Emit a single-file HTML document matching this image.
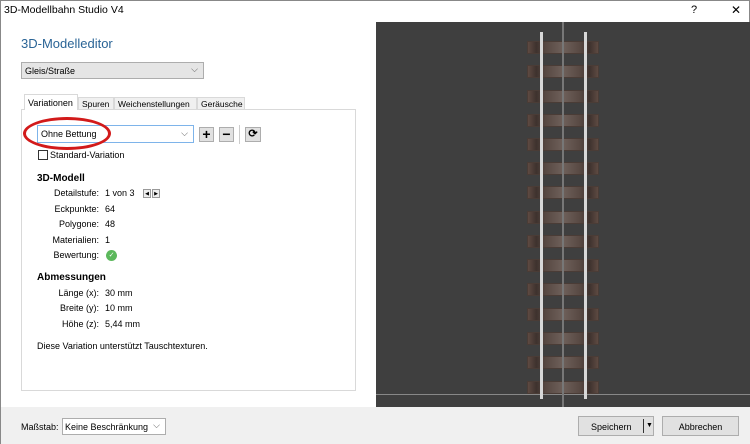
<!DOCTYPE html><html><head><meta charset="utf-8"><style>
*{margin:0;padding:0;box-sizing:border-box}
body{width:750px;height:444px;overflow:hidden;background:#fff;font-family:"Liberation Sans",sans-serif;font-size:9px;color:#000;position:relative;border:1px solid #888}
.a{position:absolute;white-space:nowrap}
.r{text-align:right;width:80px}
.sl{position:absolute;left:526px;width:72px;height:13px;background:linear-gradient(90deg,#5e4a42 0,#3e322e 12%,#574842 25%,#6e605a 50%,#574842 75%,#3e322e 88%,#5e4a42 100%);border:1px solid #4a3c36}
</style></head><body>
<div class="a" style="left:3px;top:3px;font-size:10.5px">3D-Modellbahn Studio V4</div>
<div class="a" style="left:690px;top:3px;font-size:11px">?</div>
<div class="a" style="left:730px;top:2px;font-size:12px">✕</div>
<div class="a" style="left:20px;top:35px;font-size:13px;color:#2a6496">3D-Modelleditor</div>
<div class="a" style="left:20px;top:61px;width:183px;height:17px;background:#e5e5e5;border:1px solid #adadad;padding:3px 3px">Gleis/Straße<span style="position:absolute;right:5px;top:1px;color:#555">⌵</span></div>
<div class="a" style="left:20px;top:108px;width:335px;height:282px;border:1px solid #d9d9d9;background:#fff"></div>
<div class="a" style="left:23px;top:93px;width:54px;height:16px;border:1px solid #d9d9d9;border-bottom:none;background:#fff;padding:3px 3px">Variationen</div>
<div class="a" style="left:77px;top:96px;width:36px;height:13px;border:1px solid #d9d9d9;background:#f0f0f0;padding:1px 3px;font-size:8.5px">Spuren</div>
<div class="a" style="left:113px;top:96px;width:83px;height:13px;border:1px solid #d9d9d9;background:#f0f0f0;padding:1px 3px;font-size:8.5px">Weichenstellungen</div>
<div class="a" style="left:196px;top:96px;width:48px;height:13px;border:1px solid #d9d9d9;background:#f0f0f0;padding:1px 3px;font-size:8.5px">Geräusche</div>
<div class="a" style="left:36px;top:124px;width:157px;height:18px;border:1px solid #7eb4ea;background:#fff;padding:3px 3px">Ohne Bettung<span style="position:absolute;right:5px;top:2px;color:#555">⌵</span></div>
<div class="a" style="left:22px;top:116px;width:88px;height:33px;border:3px solid #d21a1a;border-radius:50%"></div>
<div class="a" style="left:198px;top:126px;width:15px;height:15px;background:#e1e1e1;border:1px solid #adadad;font-size:14px;font-weight:bold;text-align:center;line-height:12px">+</div>
<div class="a" style="left:218px;top:126px;width:15px;height:15px;background:#e1e1e1;border:1px solid #adadad;font-size:14px;font-weight:bold;text-align:center;line-height:12px">−</div>
<div class="a" style="left:238px;top:124px;width:1px;height:19px;background:#ccc"></div>
<div class="a" style="left:244px;top:126px;width:16px;height:15px;background:#e1e1e1;border:1px solid #adadad;font-size:11px;font-weight:bold;text-align:center;line-height:13px">⟳</div>
<div class="a" style="left:37px;top:149px;width:10px;height:10px;border:1px solid #333"></div>
<div class="a" style="left:49px;top:149px">Standard-Variation</div>
<div class="a" style="left:36px;top:172px;font-weight:bold;font-size:10px">3D-Modell</div>
<div class="a r" style="left:18px;top:187px">Detailstufe:</div><div class="a" style="left:104px;top:187px">1 von 3</div>
<div class="a" style="left:142px;top:188px;width:8px;height:9px;border:1px solid #999;background:#eee;font-size:5px;line-height:8px;text-align:center">◀</div>
<div class="a" style="left:151px;top:188px;width:8px;height:9px;border:1px solid #999;background:#eee;font-size:5px;line-height:8px;text-align:center">▶</div>
<div class="a r" style="left:18px;top:203px">Eckpunkte:</div><div class="a" style="left:104px;top:203px">64</div>
<div class="a r" style="left:18px;top:218px">Polygone:</div><div class="a" style="left:104px;top:218px">48</div>
<div class="a r" style="left:18px;top:234px">Materialien:</div><div class="a" style="left:104px;top:234px">1</div>
<div class="a r" style="left:18px;top:249px">Bewertung:</div>
<div class="a" style="left:105px;top:249px;width:11px;height:11px;border-radius:50%;background:#5cb85c;color:#fff;font-size:7px;text-align:center;line-height:11px">✓</div>
<div class="a" style="left:36px;top:271px;font-weight:bold;font-size:10px">Abmessungen</div>
<div class="a r" style="left:18px;top:287px">Länge (x):</div><div class="a" style="left:104px;top:287px">30 mm</div>
<div class="a r" style="left:18px;top:302px">Breite (y):</div><div class="a" style="left:104px;top:302px">10 mm</div>
<div class="a r" style="left:18px;top:318px">Höhe (z):</div><div class="a" style="left:104px;top:318px">5,44 mm</div>
<div class="a" style="left:36px;top:340px">Diese Variation unterstützt Tauschtexturen.</div>
<div class="a" style="left:375px;top:21px;width:374px;height:385px;background:#3f3f3f;overflow:hidden">
<div class="a" style="left:0;top:372px;width:374px;height:1px;background:#888"></div>
</div>
<div class="sl" style="top:40px"></div><div class="sl" style="top:64px"></div><div class="sl" style="top:89px"></div><div class="sl" style="top:113px"></div><div class="sl" style="top:137px"></div><div class="sl" style="top:161px"></div><div class="sl" style="top:185px"></div><div class="sl" style="top:210px"></div><div class="sl" style="top:234px"></div><div class="sl" style="top:258px"></div><div class="sl" style="top:282px"></div><div class="sl" style="top:307px"></div><div class="sl" style="top:331px"></div><div class="sl" style="top:355px"></div><div class="sl" style="top:380px"></div>
<div class="a" style="left:561px;top:21px;width:2px;height:385px;background:#777"></div>
<div class="a" style="left:539px;top:31px;width:3px;height:367px;background:#d8d8d8"></div>
<div class="a" style="left:583px;top:31px;width:3px;height:367px;background:#d8d8d8"></div>
<div class="a" style="left:0;top:406px;width:749px;height:37px;background:#f0f0f0"></div>
<div class="a" style="left:20px;top:421px">Maßstab:</div>
<div class="a" style="left:61px;top:417px;width:104px;height:17px;border:1px solid #adadad;background:#fff;padding:3px 2px">Keine Beschränkung<span style="position:absolute;right:5px;top:1px;color:#555">⌵</span></div>
<div class="a" style="left:577px;top:415px;width:76px;height:20px;border:1px solid #adadad;background:#e1e1e1;padding:5px 0 0 12px">Speichern<span style="position:absolute;left:64px;top:2px;width:1px;height:14px;background:#333"></span><span style="position:absolute;left:67px;top:5px;font-size:7px">▼</span></div>
<div class="a" style="left:661px;top:415px;width:77px;height:20px;border:1px solid #adadad;background:#e1e1e1;padding-top:5px;text-align:center">Abbrechen</div>
</body></html>
